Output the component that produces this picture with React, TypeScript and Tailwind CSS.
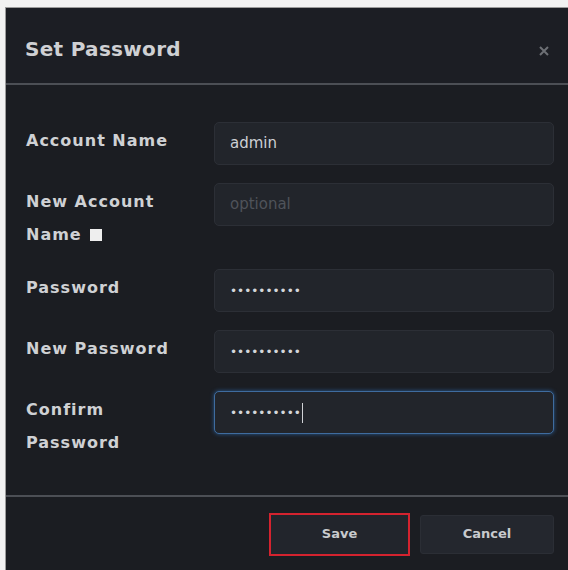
import React from 'react';

// Zeilen des Formulars
const rows: { label: string[]; value: string; kind: 'text' | 'placeholder' | 'password'; focus?: boolean; checkbox?: boolean }[] = [
  { label: ['Account Name'], value: 'admin', kind: 'text' },
  { label: ['New Account', 'Name'], value: 'optional', kind: 'placeholder', checkbox: true },
  { label: ['Password'], value: '••••••••••', kind: 'password' },
  { label: ['New Password'], value: '••••••••••', kind: 'password' },
  { label: ['Confirm', 'Password'], value: '••••••••••', kind: 'password', focus: true },
];

function Field({ value, kind, focus }: { value: string; kind: string; focus?: boolean }) {
  return (
    <div
      className={`flex h-[43px] items-center rounded-[5px] border bg-[#22252b] px-[15px] ${
        focus
          ? 'border-[#3f6c9f] shadow-[0_0_4px_#2b5a8f]'
          : 'border-[#2c2f36]'
      }`}
    >
      <span
        className={
          kind === 'placeholder'
            ? 'text-[15px] text-[#4f535a]'
            : kind === 'password'
              ? 'text-[12px] text-[#d4d6da]'
              : 'text-[15px] text-[#cdd0d4]'
        }
      >
        {value}
      </span>
      {focus && <span className="ml-[1px] h-[20px] w-[1px] bg-[#d0d2d6]" />}
    </div>
  );
}

export default function App() {
  return (
    <div
      className="h-[570px] w-[568px] overflow-hidden bg-[#f2f2f2] pl-[5px] pt-[7px]"
      style={{ fontFamily: '"DejaVu Sans", Verdana, sans-serif' }}
    >
      <div className="flex h-full flex-col border-l border-t border-[#9c9c9c] bg-[#1b1d22]">
        {/* Kopfzeile */}
        <div className="flex h-[77px] items-center justify-between border-b-2 border-[#4c4f55] bg-[#1c1e24] pl-[19px] pr-[19px] pt-[6px]">
          <h1 className="text-[20px] font-bold tracking-[0.3px] text-[#cfd0d3]">Set Password</h1>
          <svg width="10" height="10" viewBox="0 0 10 10" className="mt-[4px]">
            <path d="M1 1L9 9M9 1L1 9" stroke="#6d7075" strokeWidth="2" />
          </svg>
        </div>

        {/* Formular */}
        <div className="flex flex-1 flex-col gap-[18px] pl-[20px] pr-[14px] pt-[37px]">
          {rows.map((r, i) => (
            <div key={i} className="grid grid-cols-[188px_1fr] items-start">
              <div className="pt-[2px] text-[16px] font-bold leading-[33px] tracking-[1px] text-[#cfd1d4]">
                {r.label.map((l, j) => (
                  <div key={j} className="flex items-center">
                    {l}
                    {r.checkbox && j === r.label.length - 1 && (
                      <span className="ml-[8px] inline-block h-[12px] w-[12px] bg-[#eeeeee]" />
                    )}
                  </div>
                ))}
              </div>
              <Field value={r.value} kind={r.kind} focus={r.focus} />
            </div>
          ))}
        </div>

        {/* Fußzeile */}
        <div className="flex h-[75px] items-center justify-end gap-[10px] border-t-2 border-[#4c4f55] pr-[14px] pt-[1px]">
          <button className="h-[43px] w-[141px] border-2 border-[#d4232f] bg-[#22252c] text-[13px] font-bold text-[#c8cacd]">
            Save
          </button>
          <button className="h-[39px] w-[134px] rounded-[3px] border border-[#2b2e35] bg-[#24272e] text-[13px] font-bold text-[#c8cacd]">
            Cancel
          </button>
        </div>
      </div>
    </div>
  );
}
